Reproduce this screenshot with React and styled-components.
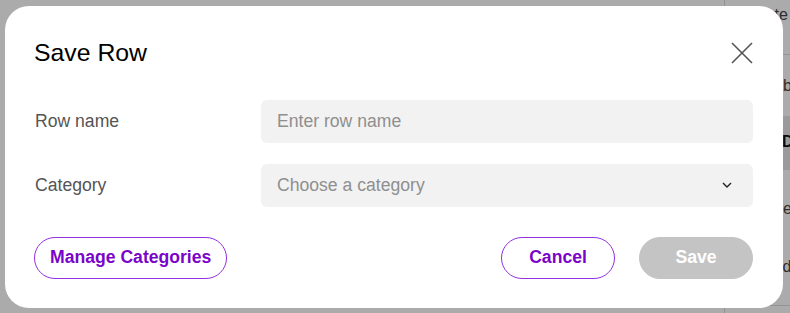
import React from "react";
import styled, { createGlobalStyle } from "styled-components";

const GlobalStyle = createGlobalStyle`
  html, body {
    margin: 0;
    padding: 0;
    background: #fff;
    font-family: "Liberation Sans", Arial, sans-serif;
  }
`;

const Page = styled.div`
  display: grid;
  grid-template-columns: 725px 1fr;
  height: 313px;
  overflow: hidden;
`;

const MainColumn = styled.div`
  border-right: 1px solid #d8d8d8;
`;

const SideColumn = styled.div`
  display: flex;
  flex-direction: column;
  overflow: hidden;
  white-space: nowrap;
`;

const SideCell = styled.div`
  height: ${(p) => p.h}px;
  padding-left: ${(p) => p.indent}px;
  padding-top: ${(p) => p.top}px;
  box-sizing: border-box;
  font-size: 16px;
  line-height: 18px;
  font-weight: ${(p) => (p.bold ? 700 : 400)};
  background: ${(p) => (p.band ? "#e6e6e6" : "transparent")};
  border-bottom: ${(p) => (p.line ? "1px solid #dcdcdc" : "none")};
  color: ${(p) => (p.bold ? "#111" : "#444")};
`;

const Overlay = styled.div`
  position: fixed;
  inset: 0;
  background: rgba(0, 0, 0, 0.33);
  display: flex;
  align-items: center;
  justify-content: flex-start;
  padding-left: 5px;
`;

const Modal = styled.div`
  width: 778px;
  box-sizing: border-box;
  background: #fff;
  border-radius: 24px;
  padding: 29px 30px 29px 29px;
`;

const Header = styled.div`
  display: flex;
  align-items: center;
  justify-content: space-between;
  height: 36px;
  margin-bottom: 29px;
`;

const Title = styled.h2`
  margin: 0;
  font-size: 24.8px;
  font-weight: 400;
  color: #000;
`;

const CloseButton = styled.button`
  border: none;
  background: none;
  padding: 0;
  width: 22px;
  height: 22px;
  display: flex;
  align-items: center;
  justify-content: center;
  cursor: pointer;
`;

const Form = styled.div`
  display: grid;
  grid-template-columns: 227px 1fr;
  row-gap: 21px;
  align-items: center;
`;

const Label = styled.label`
  font-size: 17.6px;
  color: #555;
  padding-left: 1px;
`;

const Field = styled.div`
  height: 43px;
  background: #f2f2f2;
  border-radius: 6px;
  display: flex;
  align-items: center;
  padding: 0 16px;
`;

const Input = styled.input`
  border: none;
  outline: none;
  background: transparent;
  width: 100%;
  font-family: inherit;
  font-size: 17.6px;
  color: #333;
  padding: 0;

  &::placeholder {
    color: #8f8f8f;
  }
`;

const SelectText = styled.span`
  flex: 1;
  font-size: 17.6px;
  color: #8f8f8f;
`;

const Footer = styled.div`
  display: flex;
  align-items: center;
  justify-content: space-between;
  margin-top: 30px;
`;

const Actions = styled.div`
  display: flex;
  gap: 24px;
`;

const PillButton = styled.button`
  height: 42px;
  min-width: ${(p) => (p.wide ? "auto" : "114px")};
  padding: 0 15px;
  border-radius: 21px;
  font-family: inherit;
  font-size: 17.6px;
  font-weight: 700;
  cursor: pointer;
  border: 1px solid ${(p) => (p.filled ? "#c4c4c4" : "#9330e0")};
  background: ${(p) => (p.filled ? "#c4c4c4" : "#fff")};
  color: ${(p) => (p.filled ? "#fff" : "#7a05c8")};
`;

const CloseIcon = () => (
  <svg width="22" height="22" viewBox="0 0 22 22">
    <path d="M1 1 L21 21 M21 1 L1 21" stroke="#555" strokeWidth="1.6" fill="none" />
  </svg>
);

const Chevron = () => (
  <svg width="10" height="6" viewBox="0 0 10 6" style={{ marginRight: 5 }}>
    <path d="M1 1 L5 5 L9 1" stroke="#222" strokeWidth="1.4" fill="none" />
  </svg>
);

export default function App() {
  return (
    <>
      <GlobalStyle />
      <Page>
        <MainColumn />
        <SideColumn>
          <SideCell h={55} indent={29} top={6} line>
            Note
          </SideCell>
          <SideCell h={61} indent={41} top={22}>
            Tables
          </SideCell>
          <SideCell h={54} indent={57} top={17} band bold>
            Date
          </SideCell>
          <SideCell h={68} indent={26} top={30}>
            Close
          </SideCell>
          <SideCell h={68} indent={38} top={20} line>
            Add
          </SideCell>
        </SideColumn>
      </Page>
      <Overlay>
        <Modal>
          <Header>
            <Title>Save Row</Title>
            <CloseButton aria-label="Close">
              <CloseIcon />
            </CloseButton>
          </Header>
          <Form>
            <Label>Row name</Label>
            <Field>
              <Input placeholder="Enter row name" />
            </Field>
            <Label>Category</Label>
            <Field>
              <SelectText>Choose a category</SelectText>
              <Chevron />
            </Field>
          </Form>
          <Footer>
            <PillButton wide>Manage Categories</PillButton>
            <Actions>
              <PillButton>Cancel</PillButton>
              <PillButton filled>Save</PillButton>
            </Actions>
          </Footer>
        </Modal>
      </Overlay>
    </>
  );
}
